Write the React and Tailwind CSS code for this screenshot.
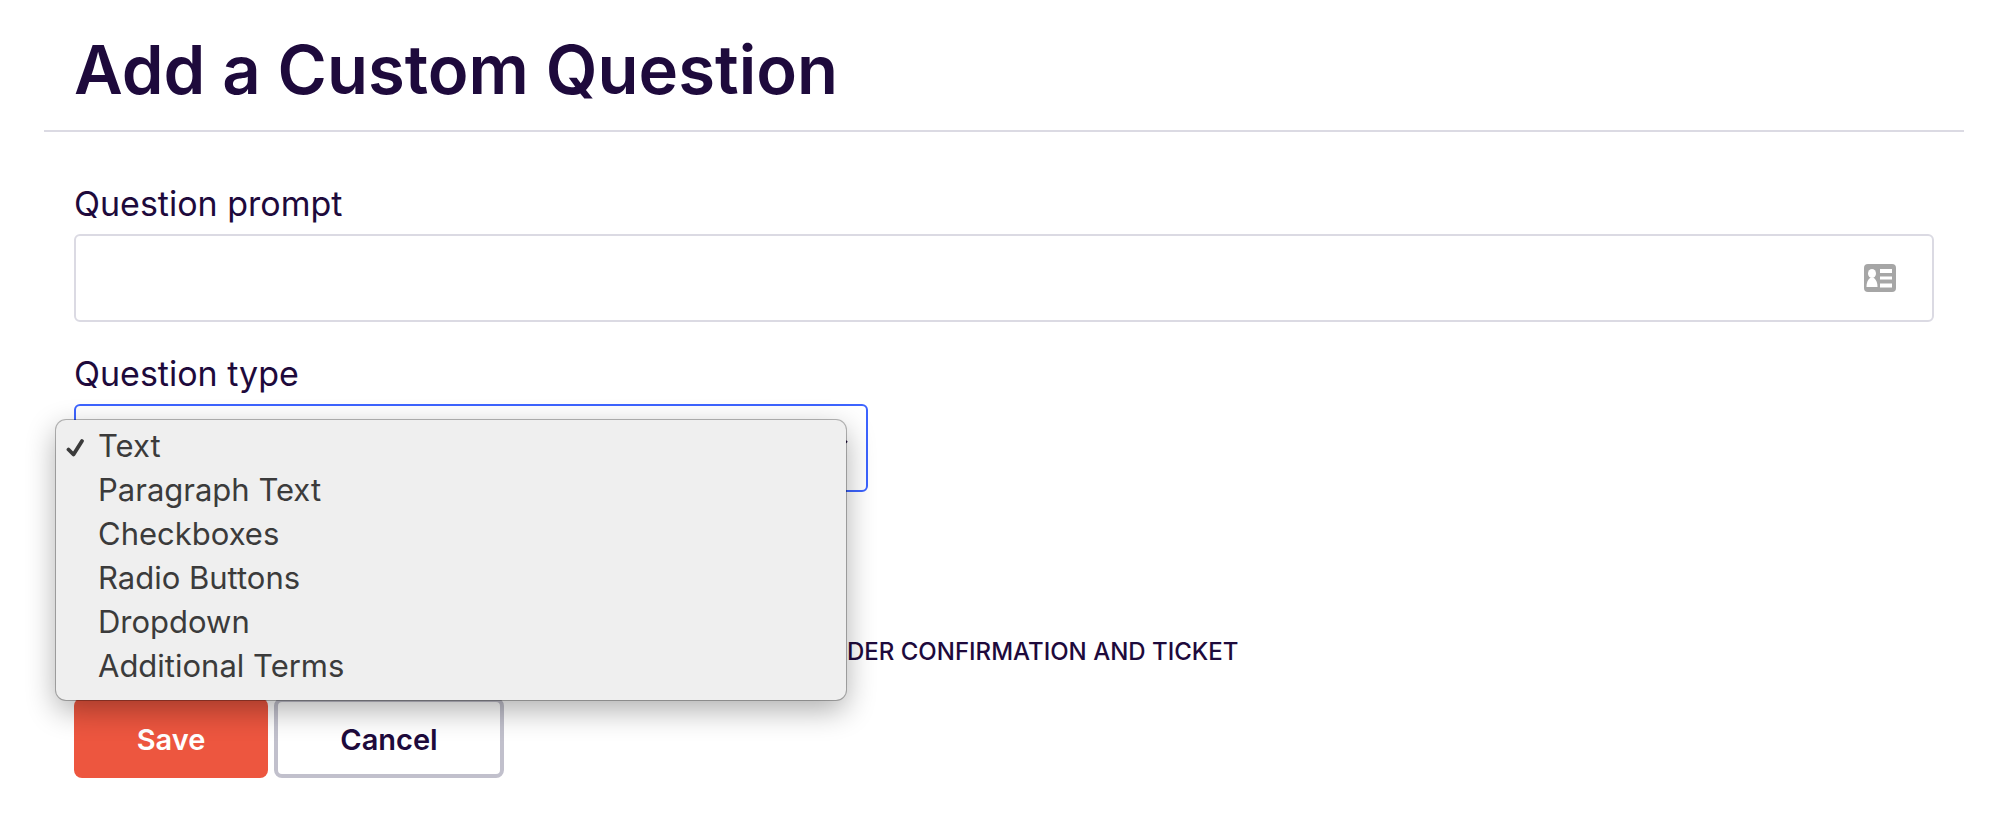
import React, { useState } from 'react';

const questionTypes = [
  'Text',
  'Paragraph Text',
  'Checkboxes',
  'Radio Buttons',
  'Dropdown',
  'Additional Terms',
];

const ContactCardIcon = () => (
  <svg viewBox="0 0 32 28" className="h-7 w-8 shrink-0" aria-hidden="true">
    <rect width="32" height="28" rx="4" fill="#a6a6a6" />
    <g fill="#fff">
      <ellipse cx="8" cy="9.5" rx="4" ry="4.5" />
      <path d="M2.500 23c0-4 1-7 3.500-9h4c2.500 2 3.500 5 3.500 9z" />
      <rect x="16" y="5" width="12" height="4" />
      <rect x="16" y="12.500" width="12" height="3" />
      <rect x="16" y="19.500" width="12" height="4" />
    </g>
  </svg>
);

const CheckIcon = () => (
  <svg viewBox="0 0 20 20" className="mt-1 h-5 w-5" fill="none" stroke="#3b3b3b" strokeWidth="3.8" strokeLinecap="round" strokeLinejoin="round" aria-hidden="true">
    <path d="M2.500 11.500l5 5L16 3" />
  </svg>
);

const TypeMenu = ({ value, onSelect }) => (
  <ul
    role="listbox"
    aria-label="Question type options"
    className="absolute top-[16px] -left-[18px] right-[22px] z-10 rounded-[10px] bg-[#efefef] pt-1 pb-3 shadow-[0_0_0_1px_rgba(0,0,0,0.28),0_10px_30px_rgba(0,0,0,0.32)]"
  >
    {questionTypes.map(type => (
      <li
        key={type}
        role="option"
        aria-selected={type === value}
        onClick={() => onSelect(type)}
        className="flex h-11 items-center pl-2.5 text-[31px] leading-[44px] text-[#3b3b3b]"
      >
        <span className="flex w-8 shrink-0">{type === value && <CheckIcon />}</span>
        {type}
      </li>
    ))}
  </ul>
);

const App = () => {
  const [prompt, setPrompt] = useState('');
  const [type, setType] = useState('Text');

  return (
    <main className="pt-[34px] pr-[38px] pl-11 font-['Inter',sans-serif] text-[#1e0a3c]">
      <header className="border-b-2 border-[#dbdae3] px-[30px] pb-6">
        <h1 className="text-[67px] leading-[72px] font-semibold">Add a Custom Question</h1>
      </header>

      <form className="px-[30px] pt-[52px]" onSubmit={e => e.preventDefault()}>
        <label htmlFor="prompt" className="block pb-2.5 text-[34px] leading-[40px]">Question prompt</label>
        <div className="flex h-[88px] items-center rounded-md border-2 border-[#dbdae3] pr-9">
          <input
            id="prompt"
            type="text"
            value={prompt}
            onChange={e => setPrompt(e.target.value)}
            className="h-full min-w-0 flex-1 px-6 text-[34px] outline-none"
          />
          <ContactCardIcon />
        </div>

        <label htmlFor="type" className="block pt-8 pb-2.5 text-[34px] leading-[40px]">Question type</label>
        <div className="relative w-[794px] max-w-full">
          <select
            id="type"
            value={type}
            onChange={e => setType(e.target.value)}
            className="block h-[88px] w-full appearance-none rounded-md border-2 border-[#3d64ff] bg-white px-6 text-[34px] outline-none"
          >
            {questionTypes.map(t => <option key={t}>{t}</option>)}
          </select>
          <svg viewBox="0 0 28 16" className="pointer-events-none absolute top-9 right-5 h-4 w-7" fill="none" stroke="#1e0a3c" strokeWidth="2" aria-hidden="true">
            <path d="M1 1l13 13L27 1" />
          </svg>
          <TypeMenu value={type} onSelect={setType} />
        </div>

        <p className="pt-36 pl-[773px] text-2xl leading-8 font-medium whitespace-nowrap">DER CONFIRMATION AND TICKET</p>

        <div className="flex gap-1.5 pt-[30px] text-[29px] font-semibold">
          <button type="submit" className="h-20 w-[194px] rounded-lg bg-[#ed563f] pt-1 text-white">Save</button>
          <button type="button" className="h-20 w-[230px] rounded-lg border-4 border-[#c1c0cc] bg-white pt-1">Cancel</button>
        </div>
      </form>
    </main>
  );
};

export default App;
